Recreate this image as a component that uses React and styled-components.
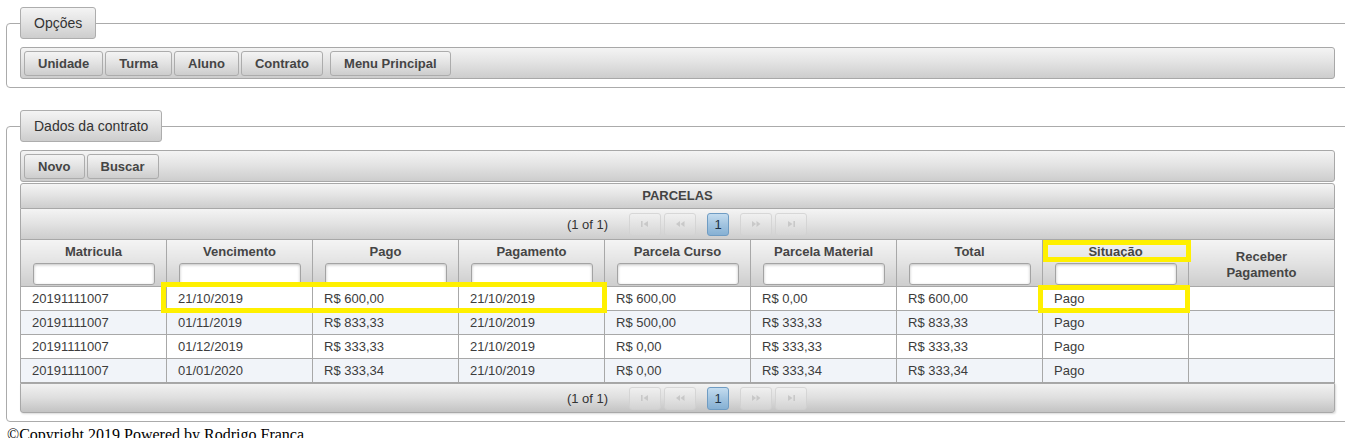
import React from "react";
import styled, { createGlobalStyle, css } from "styled-components";

const GlobalStyle = createGlobalStyle`
  html, body {
    margin: 0;
    padding: 0;
    overflow: hidden;
    background: #fff;
  }
`;

const columns = [
  "Matricula",
  "Vencimento",
  "Pago",
  "Pagamento",
  "Parcela Curso",
  "Parcela Material",
  "Total",
  "Situação",
];

const parcelas = [
  ["20191111007", "21/10/2019", "R$ 600,00", "21/10/2019", "R$ 600,00", "R$ 0,00", "R$ 600,00", "Pago"],
  ["20191111007", "01/11/2019", "R$ 833,33", "21/10/2019", "R$ 500,00", "R$ 333,33", "R$ 833,33", "Pago"],
  ["20191111007", "01/12/2019", "R$ 333,33", "21/10/2019", "R$ 0,00", "R$ 333,33", "R$ 333,33", "Pago"],
  ["20191111007", "01/01/2020", "R$ 333,34", "21/10/2019", "R$ 0,00", "R$ 333,34", "R$ 333,34", "Pago"],
];

const gradient = css`
  background: linear-gradient(to bottom, #f4f4f4 0%, #e4e4e4 45%, #cdcdcd 100%);
`;

const Page = styled.div`
  position: relative;
  display: flow-root;
  padding-left: 6px;
  font-family: "Liberation Sans", Arial, sans-serif;
  font-size: 13px;
  color: #333;
`;

const Fieldset = styled.fieldset`
  box-sizing: border-box;
  width: 1343px;
  margin: ${(p) => p.$top}px 0 0 0;
  padding: 8px 13px 8px 13px;
  border: 1px solid #ababab;
  border-radius: 4px;
  min-width: 0;
`;

const Legend = styled.legend`
  ${gradient};
  box-sizing: border-box;
  height: 32px;
  padding: 0 13px;
  line-height: 30px;
  border: 1px solid #adadad;
  border-radius: 3px;
  color: #333;
  font-size: 14px;
`;

const Toolbar = styled.div`
  ${gradient};
  box-sizing: border-box;
  height: 32px;
  display: flex;
  align-items: center;
  padding: 0 3px;
  gap: 2px;
  border: 1px solid #a8a8a8;
  border-radius: 3px;
`;

const Button = styled.button`
  ${gradient};
  height: 25px;
  margin-left: ${(p) => p.$gap || 0}px;
  padding: 0 ${(p) => p.$pad || 13}px;
  border: 1px solid #acacac;
  border-radius: 3px;
  font-family: "Liberation Sans", Arial, sans-serif;
  font-size: 13px;
  font-weight: bold;
  color: #454545;
  cursor: pointer;
`;

const Caption = styled.div`
  ${gradient};
  box-sizing: border-box;
  margin-top: 1px;
  height: 26px;
  line-height: 24px;
  text-align: center;
  border: 1px solid #a8a8a8;
  border-radius: 3px 3px 0 0;
  font-weight: bold;
  color: #444;
`;

const Paginator = styled.div`
  ${gradient};
  box-sizing: border-box;
  height: ${(p) => (p.$bottom ? 30 : 31)}px;
  display: flex;
  align-items: center;
  justify-content: center;
  padding-left: 19px;
  border: 1px solid #a8a8a8;
  border-top: ${(p) => (p.$bottom ? "1px solid #a8a8a8" : "none")};
  border-radius: ${(p) => (p.$bottom ? "0 0 3px 3px" : "0")};
  box-shadow: ${(p) => (p.$bottom ? "1px 1px 2px rgba(0,0,0,0.15)" : "none")};
  background: ${(p) =>
    p.$bottom
      ? "linear-gradient(to bottom, #f2f2f2 0%, #dedede 50%, #c3c3c3 100%)"
      : undefined};
`;

const Report = styled.span`
  color: #333;
  margin-right: 21px;
`;

const PageLink = styled.span`
  box-sizing: border-box;
  width: ${(p) => (p.$active ? 22 : 32)}px;
  height: 23px;
  margin-left: ${(p) => p.$gap || 0}px;
  display: inline-flex;
  align-items: center;
  justify-content: center;
  border: 1px solid ${(p) => (p.$active ? "#6f9cc3" : "#d2d2d2")};
  border-radius: 3px;
  font-size: 13px;
  color: #1e3145;
  background: ${(p) =>
    p.$active
      ? "linear-gradient(to bottom, #c4dcef 0%, #a2c4e0 50%, #86b0d3 100%)"
      : "linear-gradient(to bottom, #f1f1f1 0%, #e4e4e4 50%, #d6d6d6 100%)"};
  opacity: ${(p) => (p.$active ? 1 : 0.8)};
`;

const PagerIcon = ({ kind }) => {
  const shapes = {
    first: (
      <>
        <rect x="1" y="1" width="1.6" height="6" />
        <path d="M8 1 L3.5 4 L8 7 Z" />
      </>
    ),
    prev: (
      <>
        <path d="M5 1 L1 4 L5 7 Z" />
        <path d="M9.5 1 L5.5 4 L9.5 7 Z" />
      </>
    ),
    next: (
      <>
        <path d="M1 1 L5 4 L1 7 Z" />
        <path d="M5.5 1 L9.5 4 L5.5 7 Z" />
      </>
    ),
    last: (
      <>
        <path d="M2 1 L6.5 4 L2 7 Z" />
        <rect x="7.4" y="1" width="1.6" height="6" />
      </>
    ),
  };
  return (
    <svg width="11" height="8" viewBox="0 0 11 8" fill="#c3c3c3">
      {shapes[kind]}
    </svg>
  );
};

const Pager = ({ bottom }) => (
  <Paginator $bottom={bottom}>
    <Report>(1 of 1)</Report>
    <PageLink>
      <PagerIcon kind="first" />
    </PageLink>
    <PageLink $gap={3}>
      <PagerIcon kind="prev" />
    </PageLink>
    <PageLink $gap={11} $active>
      1
    </PageLink>
    <PageLink $gap={11}>
      <PagerIcon kind="next" />
    </PageLink>
    <PageLink $gap={3}>
      <PagerIcon kind="last" />
    </PageLink>
  </Paginator>
);

const Table = styled.table`
  width: 100%;
  table-layout: fixed;
  border-collapse: collapse;
  border: 1px solid #a8a8a8;
  border-top: none;
`;

const HeadCell = styled.th`
  ${gradient};
  padding: 4px 4px 1px;
  border: 1px solid #a8a8a8;
  border-top: none;
  font-weight: bold;
  font-size: 13px;
  line-height: 16px;
  color: #454545;
  text-align: center;
  vertical-align: ${(p) => (p.$middle ? "middle" : "top")};
`;

const Filter = styled.input`
  box-sizing: border-box;
  display: block;
  width: 122px;
  height: 22px;
  margin: 3px auto 0;
  border: 1px solid #a3a3a3;
  border-radius: 3px;
  background: #fff;
  box-shadow: inset 0 1px 3px rgba(0, 0, 0, 0.25);
`;

const Row = styled.tr`
  background: ${(p) => (p.$odd ? "#f1f4f9" : "#fff")};
`;

const Cell = styled.td`
  height: 23px;
  padding: 0 11px;
  border: 1px solid #a8a8a8;
  font-size: 13px;
  color: #3c3c3c;
  white-space: nowrap;
  overflow: hidden;
`;

const Highlight = styled.div`
  position: absolute;
  box-sizing: border-box;
  border: 5px solid #fff000;
  pointer-events: none;
`;

const Copyright = styled.div`
  padding: 4px 0 0 1px;
  font-family: "Liberation Serif", "Times New Roman", serif;
  font-size: 16px;
  line-height: 18px;
  color: #000;
`;

export default function App() {
  return (
    <>
      <GlobalStyle />
      <Page>
        <Fieldset $top={7}>
          <Legend>Opções</Legend>
          <Toolbar>
            <Button>Unidade</Button>
            <Button>Turma</Button>
            <Button>Aluno</Button>
            <Button>Contrato</Button>
            <Button $gap={5}>Menu Principal</Button>
          </Toolbar>
        </Fieldset>

        <Fieldset $top={22}>
          <Legend>Dados da contrato</Legend>
          <Toolbar>
            <Button>Novo</Button>
            <Button>Buscar</Button>
          </Toolbar>
          <Caption>PARCELAS</Caption>
          <Pager />
          <Table>
            <thead>
              <tr>
                {columns.map((c) => (
                  <HeadCell key={c}>
                    {c}
                    <Filter />
                  </HeadCell>
                ))}
                <HeadCell $middle>
                  Receber
                  <br />
                  Pagamento
                </HeadCell>
              </tr>
            </thead>
            <tbody>
              {parcelas.map((row, i) => (
                <Row key={i} $odd={i % 2 === 1}>
                  {row.map((v, j) => (
                    <Cell key={j}>{v}</Cell>
                  ))}
                  <Cell />
                </Row>
              ))}
            </tbody>
          </Table>
          <Pager bottom />
        </Fieldset>
        <Copyright>©Copyright 2019 Powered by Rodrigo França</Copyright>

        <Highlight style={{ left: 161, top: 282, width: 446, height: 31 }} />
        <Highlight style={{ left: 1043, top: 240, width: 148, height: 22 }} />
        <Highlight style={{ left: 1038, top: 285, width: 152, height: 28 }} />
      </Page>
    </>
  );
}
